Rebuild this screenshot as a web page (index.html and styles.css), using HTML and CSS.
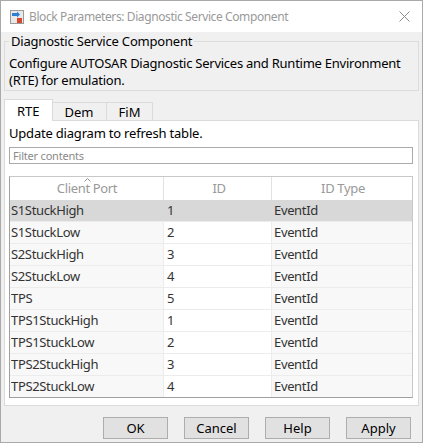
FILE: index.html
```html
<!DOCTYPE html>
<html>
<head>
<meta charset="utf-8">
<link rel="stylesheet" href="styles.css">
</head>
<body>
<div class="window">
  <div class="titlebar">
    <svg class="appicon" width="14" height="14" viewBox="0 0 14 14">
      <rect x="0.5" y="0.5" width="13" height="13" fill="#e8e8e8" stroke="#9a9a9a"/>
      <path d="M2 3 H7 V1.5 L10 4.5 L7 7.5 V6 H2 Z" fill="#2d7fd3"/>
      <rect x="7" y="8" width="5" height="5" fill="#d9482b"/>
    </svg>
    <span class="title">Block Parameters: Diagnostic Service Component</span>
    <svg class="close" width="11" height="11" viewBox="0 0 11 11">
      <path d="M0.5 0.5 L10.5 10.5 M10.5 0.5 L0.5 10.5" stroke="#8a8a8a" stroke-width="1"/>
    </svg>
  </div>
  <div class="body">
    <fieldset class="group">
      <legend>Diagnostic Service Component</legend>
      <p class="desc">Configure AUTOSAR Diagnostic Services and Runtime Environment (RTE) for emulation.</p>
    </fieldset>
    <div class="tabs">
      <div class="tab active">RTE</div>
      <div class="tab">Dem</div>
      <div class="tab">FiM</div>
    </div>
    <div class="panel">
      <div class="hint">Update diagram to refresh table.</div>
      <div class="filter">Filter contents</div>
      <div class="table">
        <div class="row head">
          <div class="cell c1">
            <svg class="caret" width="7" height="4" viewBox="0 0 7 4"><path d="M0.5 3.5 L3.5 0.5 L6.5 3.5" fill="none" stroke="#8f8f8f" stroke-width="1"/></svg>
            Client Port</div>
          <div class="cell c2">ID</div>
          <div class="cell c3">ID Type</div>
        </div>
        <div class="row sel"><div class="cell c1">S1StuckHigh</div><div class="cell c2">1</div><div class="cell c3">EventId</div></div>
        <div class="row"><div class="cell c1">S1StuckLow</div><div class="cell c2">2</div><div class="cell c3">EventId</div></div>
        <div class="row"><div class="cell c1">S2StuckHigh</div><div class="cell c2">3</div><div class="cell c3">EventId</div></div>
        <div class="row"><div class="cell c1">S2StuckLow</div><div class="cell c2">4</div><div class="cell c3">EventId</div></div>
        <div class="row"><div class="cell c1">TPS</div><div class="cell c2">5</div><div class="cell c3">EventId</div></div>
        <div class="row"><div class="cell c1">TPS1StuckHigh</div><div class="cell c2">1</div><div class="cell c3">EventId</div></div>
        <div class="row"><div class="cell c1">TPS1StuckLow</div><div class="cell c2">2</div><div class="cell c3">EventId</div></div>
        <div class="row"><div class="cell c1">TPS2StuckHigh</div><div class="cell c2">3</div><div class="cell c3">EventId</div></div>
        <div class="row last"><div class="cell c1">TPS2StuckLow</div><div class="cell c2">4</div><div class="cell c3">EventId</div></div>
      </div>
    </div>
    <div class="buttons">
      <div class="btn">OK</div>
      <div class="btn">Cancel</div>
      <div class="btn">Help</div>
      <div class="btn">Apply</div>
    </div>
  </div>
</div>
</body>
</html>
```
FILE: styles.css
```css
html, body {
  margin: 0;
  padding: 0;
  background: #ffffff;
}
body {
  font-family: "Noto Sans", "Open Sans", sans-serif;
  font-size: 13px;
  color: #1a1a1a;
}
.window {
  width: 423px;
  height: 443px;
  box-sizing: border-box;
  border: 1px solid #a9a9a9;
  display: flex;
  flex-direction: column;
  overflow: hidden;
}
.titlebar {
  height: 31px;
  flex: none;
  background: #ffffff;
  display: flex;
  align-items: center;
  padding: 0 12px 0 9px;
}
.appicon {
  flex: none;
  margin-right: 5px;
}
.title {
  color: #9a9a9a;
  font-size: 12px;
  flex: 1;
  white-space: nowrap;
  letter-spacing: -0.4px;
}
.close {
  flex: none;
}
.body {
  flex: 1;
  background: #f0f0f0;
  display: flex;
  flex-direction: column;
  padding: 0 3px;
}
.group {
  margin: 0;
  padding: 0 4px 1px 4px;
  border: 1px solid #dcdcdc;
  border-radius: 0;
}
.group legend {
  padding: 0 2px;
  margin-left: 0;
  font-size: 13px;
  color: #000;
  letter-spacing: -0.2px;
  line-height: 18px;
}
.desc {
  margin: 5px 0 0 0;
  line-height: 17px;
  color: #000;
  letter-spacing: -0.25px;
}
.tabs {
  display: flex;
  align-items: flex-end;
  height: 23px;
  margin-top: 6px;
  flex: none;
}
.tab {
  height: 18px;
  line-height: 19px;
  box-sizing: border-box;
  border: 1px solid #dadada;
  border-bottom: none;
  background: #f0f0f0;
  padding: 0 12px;
  font-size: 13px;
  margin-left: -1px;
  color: #000;
}
.tab:first-child { margin-left: 0; }
.tab.active {
  height: 22px;
  line-height: 22px;
  background: #fff;
  position: relative;
  z-index: 1;
  margin-bottom: -1px;
  padding: 0 12px;
}
.panel {
  background: #fff;
  border: 1px solid #dadada;
  padding: 2px 5px 7px 4px;
  flex: none;
}
.hint {
  line-height: 20px;
  color: #000;
  letter-spacing: -0.2px;
}
.filter {
  margin-top: 4px;
  height: 15px;
  border: 1px solid #ababab;
  color: #8a8a8a;
  font-size: 11px;
  line-height: 15px;
  padding-left: 3px;
  letter-spacing: -0.2px;
}
.table {
  margin-top: 12px;
  border: 1px solid #a0a0a0;
  border-top-color: #c8c8c8;
  border-right-color: #c8c8c8;
}
.row {
  display: grid;
  grid-template-columns: 154px 108px 1fr;
  height: 22px;
  border-bottom: 1px solid #ececec;
  box-sizing: border-box;
}
.row.last { border-bottom: none; height: 21px; }
.cell {
  padding-left: 1px;
  line-height: 21px;
  color: #333;
  border-right: 1px solid #ececec;
  white-space: nowrap;
  letter-spacing: -0.35px;
}
.cell.c3 { border-right: none; padding-left: 2px; }
.cell.c2 { background: #fff; padding-left: 3px; }
.cell.c1, .cell.c3 { background: #f8f8f8; }
.row.head {
  height: 23px;
  border-bottom: 1px solid #e2e2e2;
}
.row.head .cell {
  background: #fff;
  text-align: center;
  color: #999;
  line-height: 23px;
  position: relative;
  border-right-color: #e2e2e2;
}
.caret {
  position: absolute;
  left: 74px;
  top: 1px;
}
.row.sel .cell { background: #d8d8d8; border-right-color: #d8d8d8; }
.buttons {
  display: flex;
  justify-content: flex-end;
  gap: 16px;
  padding: 11px 8px 0 0;
}
.btn {
  width: 65px;
  height: 22px;
  box-sizing: border-box;
  background: #e1e1e1;
  border: 1px solid #adadad;
  text-align: center;
  line-height: 20px;
  color: #000;
}
```
